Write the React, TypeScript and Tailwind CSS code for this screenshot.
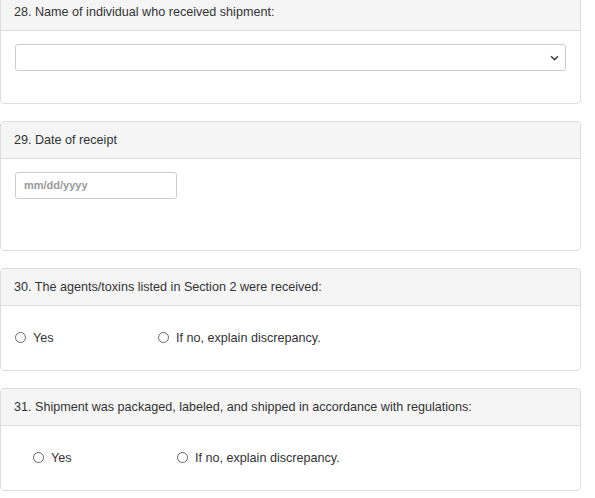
import type { ReactNode } from "react";

function Panel({ title, children, className = "" }: { title: string; children: ReactNode; className?: string }) {
  return (
    <section className={`overflow-hidden rounded-[4px] border border-[#dddddd] bg-white ${className}`}>
      <div className="flex h-[37px] items-center border-b border-[#dddddd] bg-[#f5f5f5] px-[13px] pt-px text-[12.6px] text-[#333333]">
        {title}
      </div>
      {children}
    </section>
  );
}

function Radio({ label }: { label: string }) {
  return (
    <label className="flex items-center gap-[7px] text-[12.6px] text-[#333333]">
      <span className="h-[11px] w-[11px] rounded-full border border-[#666666] bg-white" />
      {label}
    </label>
  );
}

export default function App() {
  return (
    <div
      className="min-h-[498px] bg-white"
      style={{ fontFamily: '"Liberation Sans", Arial, sans-serif' }}
    >
      <div className="flex w-[581px] flex-col gap-[17px] -mt-[7px]">
        <Panel title="28. Name of individual who received shipment:" className="h-[111px]">
          <div className="px-[14px] pt-[13px]">
            <div className="flex h-[27px] items-center justify-end rounded-[3px] border border-[#cccccc] bg-white pr-[6px]">
              <svg width="9" height="6" viewBox="0 0 9 6" className="text-[#444444]">
                <path d="M1 1.2 L4.5 4.6 L8 1.2" fill="none" stroke="currentColor" strokeWidth="1.5" />
              </svg>
            </div>
          </div>
        </Panel>

        <Panel title="29. Date of receipt" className="h-[130px]">
          <div className="px-[14px] pt-[13px]">
            <div className="flex h-[27px] w-[162px] items-center rounded-[3px] border border-[#cccccc] bg-white px-[8px] text-[11px] font-bold text-[#999999]">
              mm/dd/yyyy
            </div>
          </div>
        </Panel>

        <Panel title="30. The agents/toxins listed in Section 2 were received:" className="h-[103px]">
          <div className="flex h-[64px] items-center pl-[14px]">
            <div className="w-[143px]">
              <Radio label="Yes" />
            </div>
            <Radio label="If no, explain discrepancy." />
          </div>
        </Panel>

        <Panel title="31. Shipment was packaged, labeled, and shipped in accordance with regulations:" className="h-[103px]">
          <div className="flex h-[64px] items-center pl-[32px]">
            <div className="w-[144px]">
              <Radio label="Yes" />
            </div>
            <Radio label="If no, explain discrepancy." />
          </div>
        </Panel>
      </div>
    </div>
  );
}
